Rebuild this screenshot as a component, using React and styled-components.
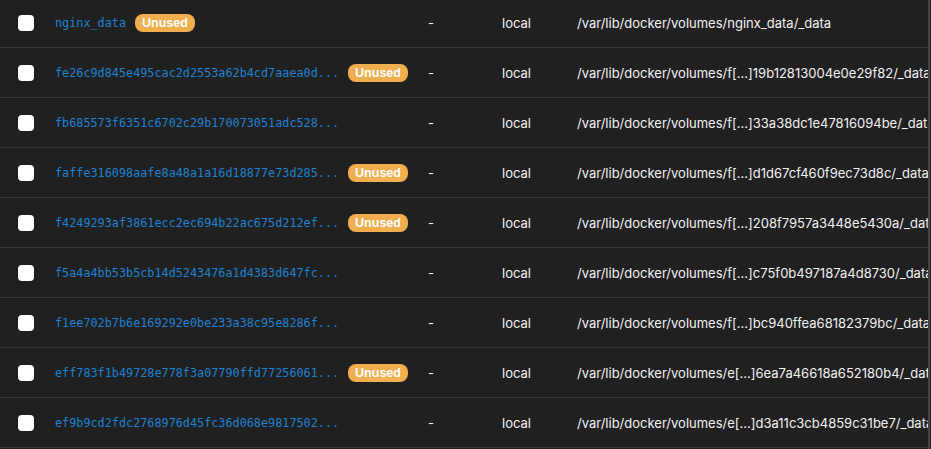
import styled, { createGlobalStyle } from "styled-components";

const GlobalStyle = createGlobalStyle`
  html, body {
    margin: 0;
    padding: 0;
    background: #202020;
    overflow: hidden;
  }
`;

const TableWrap = styled.div`
  width: 928px;
  height: 449px;
  overflow: hidden;
  border-right: 2px solid #454545;
  background: #202020;
`;

const Rows = styled.div`
  margin-top: -2px;
`;

const Row = styled.div`
  display: grid;
  grid-template-columns: 37px 373px 74px 75px 1fr;
  align-items: center;
  height: 49px;
  padding-left: 18px;
  border-bottom: 1px solid #383838;
  font-family: Inter, "Liberation Sans", sans-serif;
  font-size: 13px;
  color: #f2f2f2;
`;

const Check = styled.span`
  display: block;
  width: 16px;
  height: 16px;
  border-radius: 4px;
  background: #ffffff;
`;

const NameCell = styled.div`
  display: flex;
  align-items: center;
  gap: 9px;
  white-space: nowrap;
`;

const VolumeName = styled.span`
  font-family: "DejaVu Sans Mono", "Liberation Mono", monospace;
  font-size: 11.8px;
  color: #1d82d2;
`;

const Badge = styled.span`
  display: inline-flex;
  align-items: center;
  height: 18px;
  padding: 0 7px;
  border-radius: 8px;
  background: #f0ae4f;
  color: #ffffff;
  font-family: "Liberation Sans", Arial, sans-serif;
  font-weight: 700;
  font-size: 12.5px;
`;

const Cell = styled.div`
  white-space: nowrap;
  overflow: hidden;
`;

const volumes = [
  { name: "nginx_data", unused: true, path: "/var/lib/docker/volumes/nginx_data/_data" },
  { name: "fe26c9d845e495cac2d2553a62b4cd7aaea0d...", unused: true, path: "/var/lib/docker/volumes/f[...]19b12813004e0e29f82/_data" },
  { name: "fb685573f6351c6702c29b170073051adc528...", unused: false, path: "/var/lib/docker/volumes/f[...]33a38dc1e47816094be/_data" },
  { name: "faffe316098aafe8a48a1a16d18877e73d285...", unused: true, path: "/var/lib/docker/volumes/f[...]d1d67cf460f9ec73d8c/_data" },
  { name: "f4249293af3861ecc2ec694b22ac675d212ef...", unused: true, path: "/var/lib/docker/volumes/f[...]208f7957a3448e5430a/_data" },
  { name: "f5a4a4bb53b5cb14d5243476a1d4383d647fc...", unused: false, path: "/var/lib/docker/volumes/f[...]c75f0b497187a4d8730/_data" },
  { name: "f1ee702b7b6e169292e0be233a38c95e8286f...", unused: false, path: "/var/lib/docker/volumes/f[...]bc940ffea68182379bc/_data" },
  { name: "eff783f1b49728e778f3a07790ffd77256061...", unused: true, path: "/var/lib/docker/volumes/e[...]6ea7a46618a652180b4/_data" },
  { name: "ef9b9cd2fdc2768976d45fc36d068e9817502...", unused: false, path: "/var/lib/docker/volumes/e[...]d3a11c3cb4859c31be7/_data" },
];

export default function App() {
  return (
    <>
      <GlobalStyle />
      <TableWrap>
        <Rows>
          {volumes.map((v) => (
            <Row key={v.name}>
              <Check />
              <NameCell>
                <VolumeName>{v.name}</VolumeName>
                {v.unused && <Badge>Unused</Badge>}
              </NameCell>
              <Cell>-</Cell>
              <Cell>local</Cell>
              <Cell>{v.path}</Cell>
            </Row>
          ))}
        </Rows>
      </TableWrap>
    </>
  );
}
